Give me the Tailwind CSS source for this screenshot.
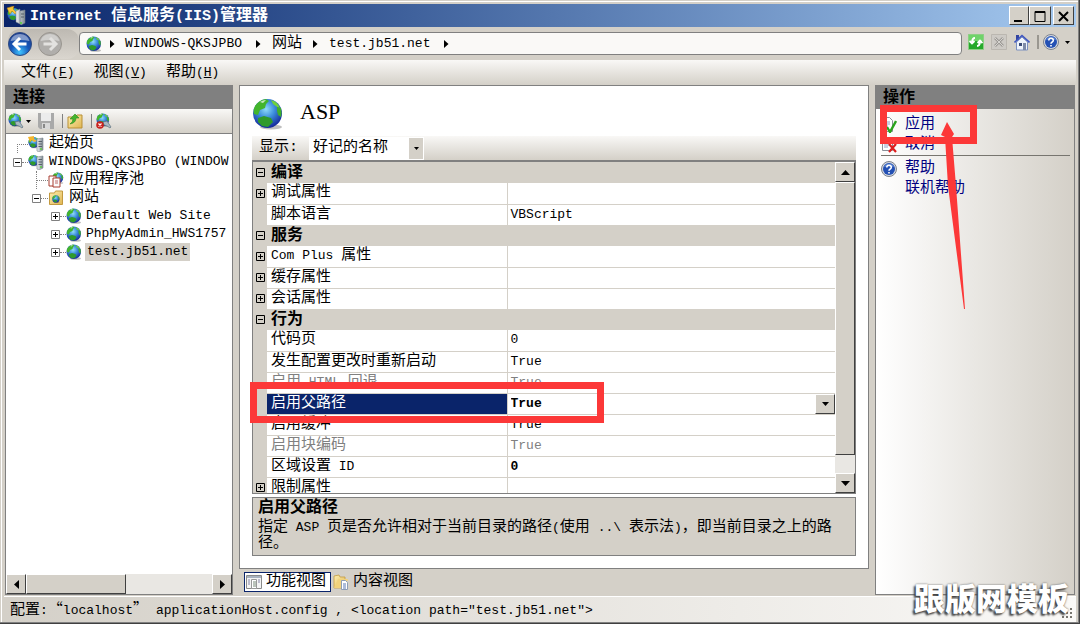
<!DOCTYPE html>
<html lang="zh-CN">

<head>
  <meta charset="UTF-8" />
  <meta name="viewport" content="width=device-width, initial-scale=1.0" />
  <title>Internet 信息服务(IIS)管理器</title>
  <script src="https://cdn.jsdelivr.net/npm/@tailwindcss/browser@4"></script>
</head>

<body class="bg-[#d4d0c8] text-black text-[15px] leading-[18px] font-['Liberation_Mono','Noto_Sans_CJK_SC',monospace] whitespace-nowrap">
  <!-- shared icons -->
  <svg class="absolute w-0 h-0" aria-hidden="true">
    <defs>
      <radialGradient id="sea" cx=".45" cy=".35" r=".65">
        <stop offset="0" stop-color="#8fdcfa" />
        <stop offset=".45" stop-color="#3d8fdc" />
        <stop offset="1" stop-color="#14289a" />
      </radialGradient>
      <radialGradient id="ball" cx=".5" cy=".85" r=".8">
        <stop offset="0" stop-color="#3fc4ff" />
        <stop offset=".5" stop-color="#1656b8" />
        <stop offset="1" stop-color="#1d3f92" />
      </radialGradient>
      <linearGradient id="folder" x1="0" y1="0" x2="1" y2="1">
        <stop offset="0" stop-color="#fff0b0" />
        <stop offset="1" stop-color="#dfb552" />
      </linearGradient>
      <linearGradient id="metal" x1="0" x2="1">
        <stop offset="0" stop-color="#eef2f4" />
        <stop offset="1" stop-color="#7f8a92" />
      </linearGradient>
      <symbol id="globe" viewBox="0 0 32 32">
        <ellipse cx="19" cy="29" rx="11" ry="2.5" fill="#000" opacity=".25" />
        <circle cx="15.500" cy="15.500" r="14.500" fill="url(#sea)" />
        <path d="M3 8Q7 2 14 1l3 2-3 3-1 4-5 2-2 5-4-1Q1 12 3 8z" fill="#43b52c" />
        <path d="M19 2q7 2 9 8l-3-1-4-3z" fill="#6fd23c" />
        <path d="M25 9l4 1q1 5 0 9l-3-2-1-4z" fill="#3fae2b" />
        <path d="M6 20l6-2 7 2 2 4-5 5-6-1-4-4z" fill="#2f9a2c" />
        <path d="M8 4q3-2 6-2l-3 3z" fill="#fff" opacity=".7" />
      </symbol>
      <symbol id="help" viewBox="0 0 16 16">
        <circle cx="8" cy="8" r="7.500" fill="#d5d9e0" stroke="#7b828e" />
        <circle cx="8" cy="8" r="6" fill="#2350b4" />
        <path d="M3 6a5.500 5.500 0 0 1 10 0q-5-1-10 0z" fill="#7da4e6" opacity=".6" />
        <path d="M5.800 6.500Q5.800 4.300 8 4.300t2.300 2q0 1.200-1.400 1.900Q8 8.700 8 9.800M8 11v1.500" fill="none" stroke="#fff" stroke-width="1.600" />
      </symbol>
      <symbol id="server" viewBox="0 0 16 16">
        <path d="M9 3l6-1v12l-4 2-2-1z" fill="url(#metal)" stroke="#7b858c" stroke-width=".6" />
        <path d="M10.500 5.500h3.500M10.500 8h3.500M10.500 10.500h3.500" stroke="#57626a" />
        <circle cx="13" cy="13" r=".9" fill="#4fd032" />
      </symbol>
      <symbol id="crumb" viewBox="0 0 5 8">
        <path d="M0 0l4.500 4L0 8z" />
      </symbol>
      <symbol id="plug" viewBox="0 0 16 16">
        <use href="#globe" width="14" height="14" />
        <path d="M7 9l4-1 2 3 2 3-1 1-3-2-3-1z" fill="#a9b8c2" stroke="#5f7280" stroke-width=".7" />
      </symbol>
      <symbol id="plus" viewBox="0 0 9 9">
        <path d="M.5.5h8v8h-8z" fill="#fff" stroke="#808080" />
        <path d="M2 4.500h5M4.500 2v5" stroke="#000" />
      </symbol>
      <symbol id="minus" viewBox="0 0 9 9">
        <path d="M.5.5h8v8h-8z" fill="#fff" stroke="#808080" />
        <path d="M2 4.500h5" stroke="#000" />
      </symbol>
      <symbol id="gplus" viewBox="0 0 9 9">
        <path d="M.5.5h8v8h-8zM2 4.500h5M4.500 2v5" fill="none" stroke="#000" />
      </symbol>
      <symbol id="gminus" viewBox="0 0 9 9">
        <path d="M.5.5h8v8h-8zM2 4.500h5" fill="none" stroke="#000" />
      </symbol>
    </defs>
  </svg>

  <div class="h-screen flex flex-col border-r border-b border-[#404040] overflow-hidden">
    <div class="flex-1 min-h-0 flex flex-col border-r border-b border-[#808080] pt-px pl-px">
      <div class="flex-1 min-h-0 flex flex-col border-t border-l border-white pt-[2px] pl-[2px] pr-[2px]">

        <!-- title bar -->
        <header class="h-[23px] shrink-0 flex items-center gap-1 pl-[2px] pr-[2px] bg-linear-to-r from-[#0a246a] to-[#a6caf0] text-white">
          <svg class="w-5 h-5" viewBox="0 0 20 20">
            <use href="#globe" x="1" y="1" width="14" height="15" />
            <path d="M1 2l7-2-1 3 4 4-2 1-3-3-2 3z" fill="#f8c53a" stroke="#b67e12" stroke-width=".5" />
            <path d="M10 5l4-2v15l-4-2zM14 5l5-1v13l-4 2-1-1z" fill="url(#metal)" stroke="#78828a" stroke-width=".5" />
            <path d="M15 8h3M15 11h3" stroke="#56616a" />
            <circle cx="15" cy="17" r="1" fill="#52d536" />
          </svg>
          <h1 class="flex-1 pt-px text-[16px] font-bold"><span class="text-[15px]">Internet </span>信息服务<span class="text-[15px]">(IIS)</span>管理器</h1>
          <div class="flex text-black">
            <button aria-label="最小化" class="w-5 h-[19px] bg-[#d4d0c8] border border-t-white border-l-white border-r-[#404040] border-b-[#404040]"><svg class="w-4 h-4" viewBox="0 0 16 16"><path d="M4 12h8v2H4z" /></svg></button>
            <button aria-label="最大化" class="w-[22px] h-[19px] bg-[#d4d0c8] border border-t-white border-l-white border-r-[#404040] border-b-[#404040] pl-px"><svg class="w-[18px] h-4" viewBox="0 0 18 16"><path d="M4 3.500h10v10H4zM4 4.500h10" fill="none" stroke="#000" /></svg></button>
            <button aria-label="关闭" class="w-[21px] h-[19px] ml-[2px] bg-[#d4d0c8] border border-t-white border-l-white border-r-[#404040] border-b-[#404040]"><svg class="w-[19px] h-4" viewBox="0 0 19 16"><path d="M5 4l9 9M14 4l-9 9" stroke="#000" stroke-width="2" /></svg></button>
          </div>
        </header>

        <!-- address bar -->
        <nav class="h-[33px] shrink-0 flex items-center pl-1 pr-[6px]">
          <div class="flex w-[71px] h-[30px] items-center gap-[6px] rounded-[12px] bg-linear-to-b from-[#bdb9b2] to-[#dad6cf]">
            <button aria-label="后退"><svg class="w-6 h-6" viewBox="0 0 24 24"><circle cx="12" cy="12" r="11.500" fill="url(#ball)" stroke="#2f4a80" /><path d="M2.500 9A10 10 0 0 1 21.500 9Q12 7 2.500 9z" fill="#fff" opacity=".45" /><path d="M12 6l-6 6 6 6M6 12h12.500" fill="none" stroke="#fff" stroke-width="3" /></svg></button>
            <button aria-label="前进"><svg class="w-6 h-6" viewBox="0 0 24 24"><circle cx="12" cy="12" r="11.500" fill="#b0aeab" stroke="#99958f" /><path d="M2.500 9A10 10 0 0 1 21.500 9Q12 7 2.500 9z" fill="#fff" opacity=".4" /><path d="M12 6l6 6-6 6M18 12H5.500" fill="none" stroke="#e3e2e0" stroke-width="3" /></svg></button>
          </div>
          <div class="flex-1 h-[23px] flex items-center bg-[#faf9f7] border border-[#808080] rounded-[4px] pl-[6px] text-[13px]">
            <svg class="w-4 h-4 mr-[8px]"><use href="#globe" /></svg>
            <svg class="w-[5px] h-2 mr-[10px]"><use href="#crumb" /></svg>
            <a href="#" class="mr-[14px]">WINDOWS-QKSJPBO</a>
            <svg class="w-[5px] h-2 mr-[11px]"><use href="#crumb" /></svg>
            <a href="#" class="text-[15px] mr-[11px]">网站</a>
            <svg class="w-[5px] h-2 mr-[11px]"><use href="#crumb" /></svg>
            <a href="#" class="mr-[14px]">test.jb51.net</a>
            <svg class="w-[5px] h-2"><use href="#crumb" /></svg>
          </div>
          <div class="flex items-center gap-[7px] pl-[6px] pb-[3px]">
            <button aria-label="刷新"><svg class="w-4 h-4" viewBox="0 0 16 16"><path d="M.5.500h15v15H.5z" fill="#25a92a" stroke="#8ccf83" /><path d="M1 1h14v6H1z" fill="#6fd36a" /><path d="M7 4q-3 0-3 5M1.500 7L4 9.500 6.500 7M9 12q3 0 3-5M9.500 9L12 6.500 14.500 9" fill="none" stroke="#fff" stroke-width="1.800" /></svg></button>
            <button aria-label="停止"><svg class="w-4 h-4" viewBox="0 0 16 16"><path d="M.5.500h15v15H.5z" fill="#cdcac5" stroke="#bbb7b0" /><path d="M4 4l8 8M12 4l-8 8" stroke="#9d9a96" stroke-width="2.600" /><path d="M4 4l8 8M12 4l-8 8" stroke="#d6d4d0" /></svg></button>
            <button aria-label="主页"><svg class="w-4 h-[17px]" viewBox="0 0 16 17"><path d="M2 1h3v5H2z" fill="#3344a0" /><path d="M2.500 8L8 3l5.500 5v8h-11z" fill="#eef3fb" stroke="#7a8fc0" /><path d="M.5 8.500L8 1.500l7.500 7" fill="none" stroke="#3e56c0" stroke-width="1.600" /><path d="M5 9h3v3H5z" fill="#3c4c78" /><path d="M9 9h3v7H9z" fill="#7d8aa8" /></svg></button>
            <div class="flex items-center">
              <span class="w-[2px] h-[14px] bg-[#9a9790] mr-1"></span>
              <button aria-label="帮助" class="flex items-center gap-[6px]"><svg class="w-4 h-4"><use href="#help" /></svg><svg class="w-[5px] h-[3px]" viewBox="0 0 5 3"><path d="M0 0h5L2.500 3z" /></svg></button>
            </div>
          </div>
        </nav>

        <!-- menu -->
        <div class="h-[25px] shrink-0 flex items-center gap-[19px] pl-[17px] bg-linear-to-b from-[#f9f8f6] to-[#d4d0c8]">
          <button>文件<span class="text-[13px]">(<u>F</u>)</span></button>
          <button>视图<span class="text-[13px]">(<u>V</u>)</span></button>
          <button>帮助<span class="text-[13px]">(<u>H</u>)</span></button>
        </div>

        <div class="flex-1 min-h-0 flex gap-[6px] px-px">
          <!-- connections -->
          <aside class="w-[228px] shrink-0 flex flex-col border border-[#808080] bg-white">
            <h2 class="h-[23px] shrink-0 flex items-center pl-[7px] pt-px text-[16px] font-bold bg-[#808080]">连接</h2>
            <div class="h-[25px] shrink-0 flex items-center pl-[2px] border-b border-[#808080] bg-linear-to-b from-[#f9f8f6] to-[#d4d0c8]">
              <button aria-label="连接" class="flex items-center gap-[2px] mr-[7px]"><svg class="w-4 h-4"><use href="#plug" /></svg><svg class="w-[5px] h-[3px]" viewBox="0 0 5 3"><path d="M0 0h5L2.500 3z" /></svg></button>
              <button aria-label="保存" class="mr-2"><svg class="w-4 h-4" viewBox="0 0 16 16"><path d="M0 0h16v16H2l-2-2z" fill="#a9a9a9" /><path d="M3 0h10v8H3z" fill="#ececec" /><path d="M4 10h8v6H4z" fill="#d8d8d8" /><path d="M5 11h2v4H5z" fill="#888" /></svg></button>
              <span class="w-px h-[14px] bg-[#808080] mr-1"></span>
              <button aria-label="上移" class="mr-2"><svg class="w-4 h-4" viewBox="0 0 16 16"><path d="M1 4h7l2-2h5v13H1z" fill="url(#folder)" stroke="#b98f35" /><path d="M3 11q3-2 3-5H3l5-5 4 4H9q0 5-6 6z" fill="#45b42e" stroke="#2e8a1e" stroke-width=".6" /></svg></button>
              <span class="w-px h-[14px] bg-[#808080] mr-1"></span>
              <button aria-label="断开"><svg class="w-4 h-4" viewBox="0 0 16 16"><use href="#plug" width="16" height="16" /><circle cx="4" cy="12" r="3.800" fill="#c9211e" /><path d="M2.500 10.500l3 3M5.500 10.500l-3 3" stroke="#fff" stroke-width="1.200" /></svg></button>
            </div>
            <ul class="flex-1 min-h-0 overflow-hidden pl-[7px] pt-px">
              <li class="h-[18px] flex items-center">
                <span class="w-[11px] h-[9px] shrink-0 ml-1 border-l border-t border-dotted border-[#808080] self-end"></span>
                <svg class="w-4 h-4 shrink-0 mr-[5px]" viewBox="0 0 16 16"><use href="#globe" width="12" height="13" /><use href="#server" width="16" height="16" /><path d="M0 1l6-1v3l3 2-3 1-2-2-2 2z" fill="#f3b52e" /></svg>
                <a href="#">起始页</a>
              </li>
              <li class="h-[18px] flex items-center">
                <svg class="w-[9px] h-[9px] shrink-0"><use href="#minus" /></svg>
                <span class="w-[6px] shrink-0 border-t border-dotted border-[#808080]"></span>
                <svg class="w-4 h-4 shrink-0 mr-[5px]" viewBox="0 0 16 16"><use href="#globe" width="12" height="13" /><use href="#server" width="16" height="16" /></svg>
                <a href="#" class="text-[13px]">WINDOWS-QKSJPBO (WINDOW</a>
              </li>
              <li class="h-[18px] flex items-center">
                <span class="w-[12px] h-[18px] ml-[23px] flex items-center border-l border-dotted border-[#808080]"><span class="w-full border-t border-dotted border-[#808080]"></span></span>
                <svg class="w-4 h-4 mr-[5px]" viewBox="0 0 16 16"><use href="#globe" x="4" width="12" height="12" /><path d="M1 4h7v10H1z" fill="#fff" stroke="#a83d30" /><path d="M5 6h7v9H5z" fill="#fbfbfb" stroke="#a83d30" /><path d="M7 9h3M7 11h3" stroke="#b66" /></svg>
                <a href="#">应用程序池</a>
              </li>
              <li class="h-[18px] flex items-center">
                <svg class="w-[9px] h-[9px] ml-[19px]"><use href="#minus" /></svg>
                <span class="w-[7px] border-t border-dotted border-[#808080]"></span>
                <svg class="w-4 h-4 mr-[5px]" viewBox="0 0 16 16"><path d="M1.500 3h5l1-2h7v13.500h-13z" fill="url(#folder)" stroke="#c39a40" /><use href="#globe" x="4" y="5" width="8" height="8" /></svg>
                <a href="#">网站</a>
              </li>
              <li class="h-[18px] flex items-center text-[13px]">
                <svg class="w-[9px] h-[9px] ml-[38px]"><use href="#plus" /></svg>
                <span class="w-[6px] border-t border-dotted border-[#808080]"></span>
                <svg class="w-4 h-4 mr-[4px]"><use href="#globe" /></svg>
                <a href="#">Default Web Site</a>
              </li>
              <li class="h-[18px] flex items-center text-[13px]">
                <svg class="w-[9px] h-[9px] ml-[38px]"><use href="#plus" /></svg>
                <span class="w-[6px] border-t border-dotted border-[#808080]"></span>
                <svg class="w-4 h-4 mr-[4px]"><use href="#globe" /></svg>
                <a href="#">PhpMyAdmin_HWS1757</a>
              </li>
              <li class="h-[18px] flex items-center text-[13px]">
                <svg class="w-[9px] h-[9px] ml-[38px]"><use href="#plus" /></svg>
                <span class="w-[6px] border-t border-dotted border-[#808080]"></span>
                <svg class="w-4 h-4 mr-[3px]"><use href="#globe" /></svg>
                <a href="#" class="px-[2px] bg-[#d4d0c8]">test.jb51.net</a>
              </li>
            </ul>
            <!-- horizontal scrollbar -->
            <div class="h-5 shrink-0 flex bg-[#e9e7e3]">
              <button aria-label="向左滚动" class="w-5 grid place-items-center bg-[#d4d0c8] border border-t-white border-l-white border-r-[#404040] border-b-[#404040]"><svg class="w-[5px] h-[9px]" viewBox="0 0 5 9"><path d="M5 0v9L0 4.500z" /></svg></button>
              <div class="w-[100px] bg-[#d4d0c8] border border-t-white border-l-white border-r-[#404040] border-b-[#404040]"></div>
              <button aria-label="向右滚动" class="w-5 ml-auto grid place-items-center bg-[#d4d0c8] border border-t-white border-l-white border-r-[#404040] border-b-[#404040]"><svg class="w-[5px] h-[9px]" viewBox="0 0 5 9"><path d="M0 0v9l5-4.500z" /></svg></button>
            </div>
          </aside>

          <!-- feature page -->
          <main class="flex-1 min-w-0 flex flex-col">
            <section class="relative flex-1 min-h-0 flex flex-col border border-[#808080] bg-white pl-3 pr-3 pb-3">
              <div class="h-[50px] shrink-0 flex items-center gap-4 pt-[5px]">
                <svg class="w-8 h-8"><use href="#globe" /></svg>
                <h2 class="pb-1 text-[22px] leading-6 font-['Liberation_Serif',serif]">ASP</h2>
              </div>
              <div class="h-6 shrink-0 flex items-center pl-[7px] bg-linear-to-b from-[#f9f8f6] to-[#d4d0c8]">
                <label for="display" class="w-[50px]">显示:</label>
                <div class="relative">
                  <select id="display" class="block appearance-none w-[115px] h-[23px] pl-1 bg-white text-[15px] leading-[18px]">
                    <option>好记的名称</option>
                  </select>
                  <span class="absolute right-px top-px w-[14px] h-[21px] grid place-items-center bg-[#d4d0c8] pointer-events-none"><svg class="w-[5px] h-[3px]" viewBox="0 0 5 3"><path d="M0 0h5L2.500 3z" /></svg></span>
                </div>
              </div>

              <div class="flex-1 min-h-0 flex border border-t-2 border-[#808080]">
                <div class="flex-1 min-w-0 overflow-hidden">
                  <table class="w-full table-fixed border-collapse bg-[#d4d0c8] leading-5 text-left">
                    <colgroup>
                      <col class="w-[14px]" />
                      <col class="w-[240px]" />
                      <col />
                    </colgroup>
                    <tbody>
                      <tr class="h-[21px]">
                        <td><svg class="w-[9px] h-[9px] mx-auto"><use href="#gminus" /></svg></td>
                        <th colspan="2" class="pl-1 text-[16px] font-bold">编译</th>
                      </tr>
                      <tr class="h-[21px]">
                        <td><svg class="w-[9px] h-[9px] mx-auto"><use href="#gplus" /></svg></td>
                        <td class="pl-1 bg-white border-b border-r border-[#d4d0c8]">调试属性</td>
                        <td class="bg-white border-b border-[#d4d0c8]"></td>
                      </tr>
                      <tr class="h-[21px]">
                        <td></td>
                        <td class="pl-1 bg-white border-b border-r border-[#d4d0c8]">脚本语言</td>
                        <td class="pl-[3px] bg-white border-b border-[#d4d0c8] text-[13px]">VBScript</td>
                      </tr>
                      <tr class="h-[21px]">
                        <td><svg class="w-[9px] h-[9px] mx-auto"><use href="#gminus" /></svg></td>
                        <th colspan="2" class="pl-1 text-[16px] font-bold">服务</th>
                      </tr>
                      <tr class="h-[21px]">
                        <td><svg class="w-[9px] h-[9px] mx-auto"><use href="#gplus" /></svg></td>
                        <td class="pl-1 bg-white border-b border-r border-[#d4d0c8]"><span class="text-[13px]">Com Plus </span>属性</td>
                        <td class="bg-white border-b border-[#d4d0c8]"></td>
                      </tr>
                      <tr class="h-[21px]">
                        <td><svg class="w-[9px] h-[9px] mx-auto"><use href="#gplus" /></svg></td>
                        <td class="pl-1 bg-white border-b border-r border-[#d4d0c8]">缓存属性</td>
                        <td class="bg-white border-b border-[#d4d0c8]"></td>
                      </tr>
                      <tr class="h-[21px]">
                        <td><svg class="w-[9px] h-[9px] mx-auto"><use href="#gplus" /></svg></td>
                        <td class="pl-1 bg-white border-b border-r border-[#d4d0c8]">会话属性</td>
                        <td class="bg-white border-b border-[#d4d0c8]"></td>
                      </tr>
                      <tr class="h-[21px]">
                        <td><svg class="w-[9px] h-[9px] mx-auto"><use href="#gminus" /></svg></td>
                        <th colspan="2" class="pl-1 text-[16px] font-bold">行为</th>
                      </tr>
                      <tr class="h-[21px]">
                        <td></td>
                        <td class="pl-1 bg-white border-b border-r border-[#d4d0c8]">代码页</td>
                        <td class="pl-[3px] bg-white border-b border-[#d4d0c8] text-[13px]">0</td>
                      </tr>
                      <tr class="h-[21px]">
                        <td></td>
                        <td class="pl-1 bg-white border-b border-r border-[#d4d0c8]">发生配置更改时重新启动</td>
                        <td class="pl-[3px] bg-white border-b border-[#d4d0c8] text-[13px]">True</td>
                      </tr>
                      <tr class="h-[21px] text-[#808080]">
                        <td></td>
                        <td class="pl-1 bg-white border-b border-r border-[#d4d0c8]">启用<span class="text-[13px]"> HTML </span>回退</td>
                        <td class="pl-[3px] bg-white border-b border-[#d4d0c8] text-[13px]">True</td>
                      </tr>
                      <tr class="h-[21px]">
                        <td></td>
                        <td class="pl-1 bg-[#0a246a] text-white border-b border-r border-[#d4d0c8]"><label for="parentPaths">启用父路径</label></td>
                        <td class="pl-[3px] bg-white border-b border-[#d4d0c8]">
                          <div class="flex h-5">
                            <input id="parentPaths" type="text" value="True" class="flex-1 min-w-0 text-[13px] font-bold outline-none" />
                            <button aria-label="展开" class="w-5 h-5 grid place-items-center bg-[#d4d0c8] border border-t-white border-l-white border-r-[#404040] border-b-[#404040]"><svg class="w-[7px] h-1" viewBox="0 0 7 4"><path d="M0 0h7L3.500 4z" /></svg></button>
                          </div>
                        </td>
                      </tr>
                      <tr class="h-[21px]">
                        <td></td>
                        <td class="pl-1 bg-white border-b border-r border-[#d4d0c8]">启用缓冲</td>
                        <td class="pl-[3px] bg-white border-b border-[#d4d0c8] text-[13px]">True</td>
                      </tr>
                      <tr class="h-[21px] text-[#808080]">
                        <td></td>
                        <td class="pl-1 bg-white border-b border-r border-[#d4d0c8]">启用块编码</td>
                        <td class="pl-[3px] bg-white border-b border-[#d4d0c8] text-[13px]">True</td>
                      </tr>
                      <tr class="h-[21px]">
                        <td></td>
                        <td class="pl-1 bg-white border-b border-r border-[#d4d0c8]">区域设置<span class="text-[13px]"> ID</span></td>
                        <td class="pl-[3px] bg-white border-b border-[#d4d0c8] text-[13px] font-bold">0</td>
                      </tr>
                      <tr class="h-[21px]">
                        <td><svg class="w-[9px] h-[9px] mx-auto"><use href="#gplus" /></svg></td>
                        <td class="pl-1 bg-white border-b border-r border-[#d4d0c8]">限制属性</td>
                        <td class="bg-white border-b border-[#d4d0c8]"></td>
                      </tr>
                    </tbody>
                  </table>
                </div>
                <!-- vertical scrollbar -->
                <div class="w-5 shrink-0 flex flex-col bg-[#e9e7e3]">
                  <button aria-label="向上滚动" class="h-5 grid place-items-center bg-[#d4d0c8] border border-t-white border-l-white border-r-[#404040] border-b-[#404040]"><svg class="w-[9px] h-[5px]" viewBox="0 0 9 5"><path d="M0 5h9L4.500 0z" /></svg></button>
                  <div class="flex-1 mb-[18px] bg-[#d4d0c8] border border-t-white border-l-white border-r-[#404040] border-b-[#404040]"></div>
                  <button aria-label="向下滚动" class="h-5 grid place-items-center bg-[#d4d0c8] border border-t-white border-l-white border-r-[#404040] border-b-[#404040]"><svg class="w-[9px] h-[5px]" viewBox="0 0 9 5"><path d="M0 0h9L4.500 5z" /></svg></button>
                </div>
              </div>

              <div class="h-[59px] shrink-0 mt-[3px] px-[5px] bg-[#d4d0c8] border border-[#808080] whitespace-normal">
                <h3 class="text-[16px] leading-5 font-bold">启用父路径</h3>
                <p class="mt-[2px] leading-4">指定<span class="text-[13px]"> ASP </span>页是否允许相对于当前目录的路径<span class="text-[13px]">(</span>使用<span class="text-[13px]"> ..\ </span>表示法<span class="text-[13px]">)</span>，即当前目录之上的路径。</p>
              </div>

              <!-- highlight round the selected property -->
              <div class="absolute left-[10px] top-[296px] w-[354px] h-[41px] border-[7px] border-[#fc3838] pointer-events-none"></div>
            </section>

            <div class="h-[26px] shrink-0 flex items-center pl-[5px] gap-[2px]">
              <button class="h-5 flex items-center gap-1 pl-px pr-1 bg-white border border-[#0a246a]"><svg class="w-4 h-4" viewBox="0 0 16 16"><path d="M.5 1.500h15v13H.5z" fill="#f4f4f4" stroke="#8a8a8a" /><path d="M1 2h14v2H1z" fill="#a9b3c0" /><path d="M2 6h2M2 8h2M2 10h2M12 6h2M12 8h2" stroke="#88a" /><path d="M5.500 5.500h5v9h-5z" fill="#fff" stroke="#999" /><path d="M7 8h3M7 10h3M7 12h3" stroke="#787" /></svg>功能视图</button>
              <button class="h-5 flex items-center gap-1"><svg class="w-4 h-4" viewBox="0 0 16 16"><path d="M1 2l5-1 1 2h5v11H1z" fill="url(#folder)" stroke="#c39a40" stroke-width=".8" /><path d="M1 14L5 5h10l-3 9z" fill="#f1d27c" /><path d="M8.500 6.500h4l2 2v7h-6z" fill="#fff" stroke="#8d9db5" /><path d="M10 10h3M10 12h3M10 14h3" stroke="#5b79b5" /></svg>内容视图</button>
            </div>
          </main>

          <!-- actions -->
          <aside class="relative w-[200px] shrink-0 flex flex-col border border-[#808080] bg-linear-to-r from-white to-[#d4d0c8] text-[#00007f]">
            <h2 class="h-[23px] shrink-0 flex items-center pl-[7px] pt-px text-[16px] font-bold bg-[#808080] text-black">操作</h2>
            <div class="flex flex-col pl-[5px] pr-1 pt-[6px]">
              <button class="h-5 flex items-center gap-2"><svg class="w-4 h-4" viewBox="0 0 16 16"><path d="M1.500.5h7l3 3v11h-10z" fill="#fff" stroke="#8a8f99" /><path d="M3 5h6M3 7h6M3 9h4M3 11h4" stroke="#8da0c4" /><path d="M6 10l3 5 6-11" fill="none" stroke="#29a31d" stroke-width="2.400" /></svg>应用</button>
              <button class="h-5 flex items-center gap-2"><svg class="w-4 h-4" viewBox="0 0 16 16"><path d="M1.500.5h7l3 3v10h-10z" fill="#fff" stroke="#8a8f99" /><path d="M3 6h6M3 8h5M3 10h4" stroke="#8da0c4" /><path d="M8 7l7 8M15 7l-7 8" stroke="#dc1e1e" stroke-width="2.200" /></svg>取消</button>
              <hr class="border-[#77756f]" />
              <a href="#" class="h-5 mt-[3px] flex items-center gap-2"><svg class="w-4 h-4"><use href="#help" /></svg>帮助</a>
              <a href="#" class="h-5 flex items-center pl-6">联机帮助</a>
            </div>
            <!-- highlight and arrow -->
            <div class="absolute left-[4px] top-[19px] w-[97px] h-[39px] border-[7px] border-[#fc3838] pointer-events-none"></div>
            <svg class="absolute left-[64px] top-[36px] w-[28px] h-[188px] pointer-events-none" viewBox="0 0 28 188"><path d="M7 0L14 12 12 15 16 64 25 187 24 187 8 64 5 15 1 13z" fill="#fc3838" /></svg>
          </aside>
        </div>

        <!-- status bar -->
        <footer class="relative h-[26px] shrink-0 mt-px flex items-center pl-[6px] border-t border-white bg-linear-to-r from-[#d4d0c8] to-[#faf9f7]">
          <p>配置<span class="text-[13px]">:</span><span class="font-['Noto_Sans_CJK_SC',sans-serif]">“</span><span class="text-[13px]">localhost</span><span class="font-['Noto_Sans_CJK_SC',sans-serif]">”</span><span class="text-[13px]"> applicationHost.config , &lt;location path="test.jb51.net"&gt;</span></p>
          <svg class="absolute right-1 bottom-1 w-[10px] h-[10px]" viewBox="0 0 10 10"><path d="M8 0h2v2H8zM4 4h2v2H4zM8 4h2v2H8zM0 8h2v2H0zM4 8h2v2H4zM8 8h2v2H8z" fill="#77756f" /></svg>
          <span class="absolute right-[7px] bottom-0 text-[31px] leading-[40px] font-black text-white text-shadow-[-2px_2px_2px_#444,0_0_2px_#555]">跟版网模板</span>
        </footer>
      </div>
    </div>
  </div>
</body>

</html>
